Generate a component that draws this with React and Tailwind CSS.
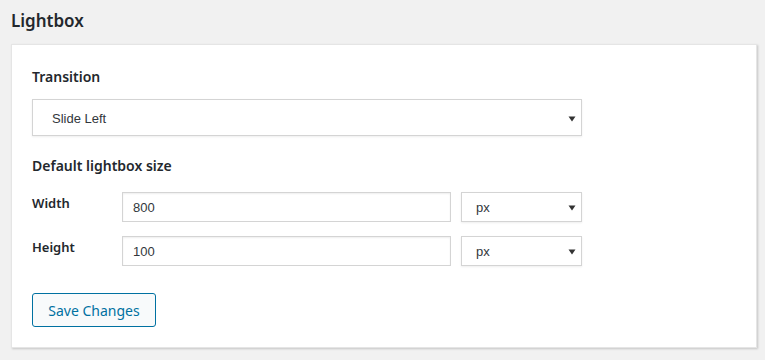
import React from "react";

const arial = { fontFamily: '"Liberation Sans", Arial, sans-serif' };

const Arrow = () => (
  <svg width="8" height="6" viewBox="0 0 8 6" className="shrink-0">
    <path d="M0.5 0.5 L7.5 0.5 L4 5.5 Z" fill="#333" />
  </svg>
);

const Select = ({ value, className }) => (
  <div
    className={`flex items-center justify-between bg-white border border-[#d4d4d4] shadow-[0_1px_2px_rgba(0,0,0,0.07)] pr-[5px] text-[13px] leading-[16px] text-[#32373c] ${className}`}
    style={arial}
  >
    <span>{value}</span>
    <Arrow />
  </div>
);

const Input = ({ value }) => (
  <div
    className="w-[329px] h-[30px] border border-[#d4d4d4] shadow-[inset_0_1px_2px_rgba(0,0,0,0.07)] flex items-center pl-[10px] pt-[1px] text-[13px] text-[#32373c]"
    style={arial}
  >
    {value}
  </div>
);

const Row = ({ label, value }) => (
  <div className="flex items-start gap-[10px]">
    <div className="w-[80px] pt-[2px] text-[13px] font-semibold text-[#23282d] leading-[18px]">{label}</div>
    <Input value={value} />
    <Select value="px" className="w-[121px] h-[30px] pl-[14px] pt-[2px]" />
  </div>
);

export default function App() {
  const seg = { fontFamily: '"Noto Sans", "Open Sans", sans-serif' };
  return (
    <div className="w-[765px] h-[360px] bg-[#f1f1f1] overflow-hidden" style={seg}>
      <div className="h-[44px] pl-[11px] pt-[9px] text-[17px] font-semibold text-[#23282d] leading-[24px]">Lightbox</div>
      <div className="ml-[11px] w-[746px] h-[304px] bg-white border border-[#e5e5e5] shadow-[1px_1px_2px_rgba(0,0,0,0.18)] pl-[20px] flex flex-col items-start">
        <div className="pt-[22px] text-[14px] font-semibold text-[#23282d] leading-[20px]">Transition</div>
        <Select value="Slide Left" className="mt-[12px] w-[550px] h-[37px] pl-[19px] pt-[3px]" />
        <div className="mt-[20px] text-[14px] font-semibold text-[#23282d] leading-[20px]">Default lightbox size</div>
        <div className="mt-[16px] flex flex-col gap-[14px]">
          <Row label="Width" value="800" />
          <Row label="Height" value="100" />
        </div>
        <button className="mt-[27px] w-[124px] h-[34px] rounded-[3px] border border-[#0071a1] bg-[#f8fafb] text-[#0071a1] text-[14px] leading-[20px] flex items-center justify-center pt-[2px]">Save Changes</button>
      </div>
    </div>
  );
}
